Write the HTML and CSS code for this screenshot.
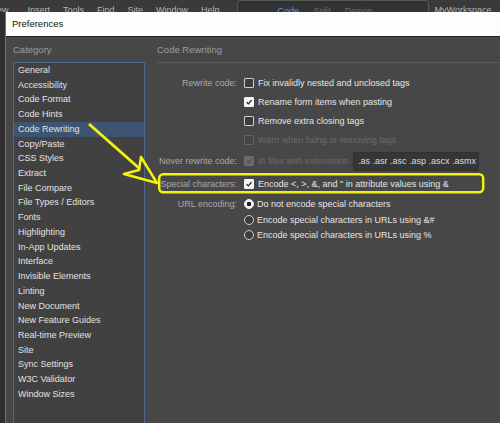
FILE: index.html
```html
<!DOCTYPE html>
<html lang="en">
<head>
    <meta charset="UTF-8">
    <meta name="viewport" content="width=device-width, initial-scale=1.0">
    <title>Preferences</title>
    <link rel="stylesheet" href="styles.css">
</head>
<body>
    <div class="menubar">
        <span class="menu first">ew</span>
        <span class="menu">Insert</span>
        <span class="menu">Tools</span>
        <span class="menu">Find</span>
        <span class="menu">Site</span>
        <span class="menu">Window</span>
        <span class="menu">Help</span>
        <div class="view-tabs">
            <span class="on">Code</span>
            <span>Split</span>
            <span>Design</span>
        </div>
        <span class="workspace">MyWorkspace</span>
    </div>

    <div class="dialog">
        <div class="titlebar">Preferences</div>
        <div class="dlg-body">
            <div class="cat-col">
                <div class="col-head">Category</div>
                <ul class="cat-list">
                    <li>General</li>
                    <li>Accessibility</li>
                    <li>Code Format</li>
                    <li>Code Hints</li>
                    <li class="selected">Code Rewriting</li>
                    <li>Copy/Paste</li>
                    <li>CSS Styles</li>
                    <li>Extract</li>
                    <li>File Compare</li>
                    <li>File Types / Editors</li>
                    <li>Fonts</li>
                    <li>Highlighting</li>
                    <li>In-App Updates</li>
                    <li>Interface</li>
                    <li>Invisible Elements</li>
                    <li>Linting</li>
                    <li>New Document</li>
                    <li>New Feature Guides</li>
                    <li>Real-time Preview</li>
                    <li>Site</li>
                    <li>Sync Settings</li>
                    <li>W3C Validator</li>
                    <li>Window Sizes</li>
                </ul>
            </div>

            <div class="pane">
                <div class="pane-head">Code Rewriting</div>
                <div class="form">
                    <div class="row">
                        <span class="label">Rewrite code:</span>
                        <span class="check"></span>
                        <span class="opt">Fix invalidly nested and unclosed tags</span>
                    </div>
                    <div class="row">
                        <span class="label"></span>
                        <span class="check checked"><svg viewBox="0 0 10 10"><path d="M2 5.2 L4.2 7.4 L8.2 2.6"/></svg></span>
                        <span class="opt">Rename form items when pasting</span>
                    </div>
                    <div class="row">
                        <span class="label"></span>
                        <span class="check"></span>
                        <span class="opt">Remove extra closing tags</span>
                    </div>
                    <div class="row tall">
                        <span class="label"></span>
                        <span class="check disabled"></span>
                        <span class="opt dim">Warn when fixing or removing tags</span>
                    </div>
                    <div class="row ext-row">
                        <span class="label">Never rewrite code:</span>
                        <span class="check disabled checked"><svg viewBox="0 0 10 10"><path d="M2 5.2 L4.2 7.4 L8.2 2.6"/></svg></span>
                        <span class="opt dim">In files with extensions</span>
                        <span class="ext-field">.as .asr .asc .asp .ascx .asmx .asp</span>
                    </div>
                    <div class="row special-row">
                        <span class="label">Special characters:</span>
                        <span class="check checked"><svg viewBox="0 0 10 10"><path d="M2 5.2 L4.2 7.4 L8.2 2.6"/></svg></span>
                        <span class="opt">Encode &lt;, &gt;, &amp;, and " in attribute values using &amp;</span>
                    </div>
                    <div class="row radio-row first-radio">
                        <span class="label">URL encoding:</span>
                        <span class="radio on"></span>
                        <span class="opt">Do not encode special characters</span>
                    </div>
                    <div class="row radio-row">
                        <span class="label"></span>
                        <span class="radio"></span>
                        <span class="opt">Encode special characters in URLs using &amp;#</span>
                    </div>
                    <div class="row radio-row">
                        <span class="label"></span>
                        <span class="radio"></span>
                        <span class="opt">Encode special characters in URLs using %</span>
                    </div>
                </div>
            </div>
        </div>
    </div>

    <!-- yellow callout drawn over the dialog -->
    <svg class="annotation" width="500" height="423" viewBox="0 0 500 423">
        <rect x="159.2" y="174.2" width="324" height="18" rx="4" />
        <line x1="89" y1="124" x2="140" y2="169" />
        <polygon points="141,157 157,183 124,174 139,170" />
    </svg>
</body>
</html>
```

FILE: styles.css
```css
html, body {
    margin: 0;
    height: 100%;
}

body {
    background-color: #2e2e2e;
    font-family: "Liberation Sans", Arial, sans-serif;
    font-size: 9px;
    color: #e2e2e2;
    overflow: hidden;
    position: relative;
}

/* app menu bar peeking out behind the dialog */
.menubar {
    height: 12px;
    display: flex;
    align-items: flex-start;
    background-color: #3a3a3a;
    overflow: hidden;
    color: #b4b4b4;
    font-size: 9px;
}

.menu {
    margin-left: 13px;
    padding-top: 5px;
}

.menu.first {
    margin-left: -3px;
    margin-right: 6px;
}

.view-tabs {
    margin-left: 17px;
    width: 150px;
    height: 14px;
    padding-left: 40px;
    display: flex;
    gap: 14px;
    padding-top: 5px;
    background-color: #323232;
    border: 1px solid #575757;
    border-radius: 3px 3px 0 0;
    color: #6e6e6e;
}

.view-tabs .on {
    color: #5a9ae0;
}

.workspace {
    margin-left: 6px;
    padding-top: 5px;
}

/* dialog */
.dialog {
    margin-left: 5px;
    height: calc(100% - 12px);
    overflow: hidden;
    background-color: #474747;
    border-left: 1px solid #8f6d3e;
}

.titlebar {
    height: 24px;
    line-height: 24px;
    padding-left: 6px;
    background-color: #fdfdfd;
    border-bottom: 1px solid #262626;
    color: #111;
    font-size: 9.5px;
}

.dlg-body {
    display: flex;
    padding-left: 7px;
}

.col-head,
.pane-head {
    height: 25px;
    line-height: 25px;
    color: #9c9c9c;
    font-size: 9.5px;
}

.cat-col {
    width: 132px;
}

.cat-list {
    list-style: none;
    margin: 0;
    padding: 0;
    height: 360px;
    background-color: #414141;
    border: 1px solid #4a6a8f;
    border-bottom: none;
}

.cat-list li {
    height: 14.73px;
    line-height: 14.73px;
    padding-left: 4px;
}

.cat-list li.selected {
    background-color: #3d5572;
}

.pane {
    flex: 1;
    margin-left: 12px;
}

.pane-head {
    border-bottom: 1px solid #5c5c5c;
}

.form {
    padding-top: 10px;
}

.row {
    height: 19px;
    display: flex;
    align-items: center;
}

.row.tall {
    height: 20px;
}

.row.ext-row {
    height: 22px;
}

.row.special-row {
    height: 23px;
}

.row.radio-row {
    height: 15.5px;
}

.row.first-radio {
    height: 17px;
}

.label {
    width: 80px;
    flex-shrink: 0;
    text-align: right;
    color: #a9a9a9;
    margin-right: 7px;
    white-space: nowrap;
}

.opt {
    white-space: nowrap;
    color: #e6e6e6;
}

.opt.dim {
    color: #6b6b6b;
}

.check {
    width: 8px;
    height: 8px;
    flex-shrink: 0;
    margin-right: 4px;
    border: 1px solid #cfcfcf;
    border-radius: 1px;
    background-color: #3c3c3c;
}

.check svg {
    display: block;
    width: 8px;
    height: 8px;
}

.check svg path {
    fill: none;
    stroke: #1e1e1e;
    stroke-width: 1.6;
}

.check.checked {
    background-color: #f4f4f4;
    border-color: #f4f4f4;
}

.check.disabled {
    border-color: #626262;
    background-color: #454545;
}

.check.disabled.checked {
    background-color: #6c6c6c;
    border-color: #6c6c6c;
}

.check.disabled.checked svg path {
    stroke: #4a4a4a;
}

.radio {
    width: 8px;
    height: 8px;
    flex-shrink: 0;
    margin-right: 3px;
    border: 1px solid #cfcfcf;
    border-radius: 50%;
    background-color: #3c3c3c;
}

.radio.on {
    background-color: #f4f4f4;
    border-color: #f4f4f4;
    background-image: radial-gradient(circle, #1e1e1e 0 2px, transparent 2.5px);
}

.ext-field {
    margin-left: 5px;
    width: 120px;
    height: 17px;
    line-height: 17px;
    padding-left: 4px;
    background-color: #363636;
    border: 1px solid #313131;
    color: #dcdcdc;
    white-space: nowrap;
    overflow: hidden;
}

/* callout overlay */
.annotation {
    position: absolute;
    left: 0;
    top: 0;
    pointer-events: none;
}

.annotation rect,
.annotation polygon {
    fill: none;
    stroke: #f2f20c;
    stroke-width: 2.5;
    stroke-linejoin: round;
}

.annotation line {
    stroke: #f2f20c;
    stroke-width: 3;
}
```
